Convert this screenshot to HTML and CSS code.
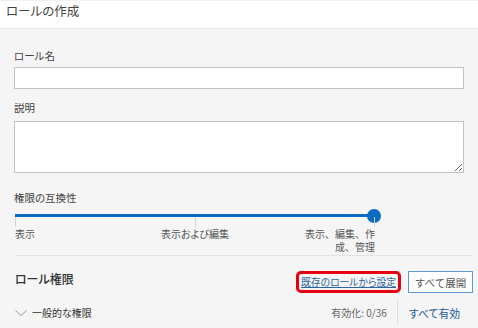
FILE: index.html
```html
<html lang="ja">
<head>
    <meta charset="utf-8"/>
    <title>ロールの作成</title>
    <link rel="stylesheet" href="styles.css">
</head>
<body>
    <header class="page-head">ロールの作成</header>

    <main class="panel">
        <div class="field">
            <label class="field-label">ロール名</label>
            <input class="text-input" type="text">
        </div>

        <div class="field">
            <label class="field-label">説明</label>
            <textarea class="text-area"></textarea>
        </div>

        <div class="field field-slider">
            <label class="field-label">権限の互換性</label>
            <div class="slider">
                <div class="track"><span class="thumb"></span></div>
                <div class="stops">
                    <span class="stop stop-start">表示</span>
                    <span class="stop stop-mid">表示および編集</span>
                    <span class="stop stop-end">表示、編集、作成、管理</span>
                </div>
            </div>
        </div>

        <hr class="divider">

        <section class="perm-head">
            <h2 class="perm-title">ロール権限</h2>
            <div class="perm-actions">
                <span class="mark"><a class="link" href="#">既存のロールから設定</a></span>
                <button class="btn">すべて展開</button>
            </div>
        </section>

        <div class="group-row">
            <div class="group-name">
                <svg class="chevron" width="12" height="6" viewBox="0 0 12 6">
                    <polyline points="0.5,0.5 6,5.5 11.5,0.5" fill="none" stroke="#9a9a9a" stroke-width="1"/>
                </svg>
                一般的な権限
            </div>
            <div class="group-tools">
                <span class="count">有効化: 0/36</span>
                <span class="sep"></span>
                <a class="enable-all" href="#">すべて有効</a>
            </div>
        </div>
    </main>
</body>
</html>
```

FILE: styles.css
```css
body {
    margin: 0;
    background: #f5f5f5;
    font-family: "Noto Sans CJK JP", "Noto Sans", sans-serif;
    font-feature-settings: "palt";
    color: #444;
}

.page-head {
    height: 29px;
    box-sizing: border-box;
    padding: 1px 0 0 6px;
    line-height: 18px;
    font-size: 12.5px;
    color: #444;
    background: #fff;
    border-top: 1px solid #f0f0f0;
    border-bottom: 1px solid #ececec;
}

.panel {
    padding: 20px 5px 0 14px;
}

.field {
    margin-right: 9px;
    margin-bottom: 12px;
}

.field-label {
    display: block;
    font-size: 10.5px;
    line-height: 14px;
    color: #444;
}

.text-input,
.text-area {
    display: block;
    width: 100%;
    box-sizing: border-box;
    border: 1px solid #c2c2c2;
    background: #fff;
    font-family: inherit;
    margin: 4px 0 0;
}
.text-input {
    height: 22px;
}
.text-area {
    height: 52px;
    margin-top: 6px;
}

.field:nth-child(2) {
    margin-bottom: 18px;
}
.field-slider {
    margin-bottom: 0;
}

.slider {
    width: 360px;
    margin: 9px 0 0 1px;
}
.track {
    position: relative;
    height: 3px;
    background: #0a6bc0;
}
.thumb {
    position: absolute;
    right: -6px;
    top: -5.5px;
    width: 14px;
    height: 14px;
    border-radius: 50%;
    background: #0a6bc0;
}

.stops {
    display: grid;
    grid-template-columns: 1fr 1fr 1fr;
    font-size: 10px;
    line-height: 13px;
    color: #555;
}
.stop {
    position: relative;
    padding-top: 10px;
}
.stop::before {
    content: "";
    position: absolute;
    top: 0;
    width: 1px;
    height: 10px;
    background: #d4d4d4;
}
.stop-start::before { left: 0; }
.stop-mid {
    text-align: center;
    white-space: nowrap;
}
.stop-mid::before { left: 50%; }
.stop-end {
    justify-self: end;
    max-width: 71px;
    text-align: right;
    font-feature-settings: normal;
}
.stop-end::before { right: 0; }

.divider {
    border: 0;
    border-top: 1px solid #e3e3e3;
    margin: 2px 0 0 1px;
}

.perm-head {
    display: flex;
    justify-content: space-between;
    align-items: flex-start;
    margin-top: 15px;
    height: 23px;
}
.perm-title {
    margin: 0 0 0 1px;
    font-size: 12px;
    font-weight: 500;
    line-height: 16px;
    color: #333;
}
.perm-actions {
    display: flex;
    align-items: center;
    gap: 7px;
}
.mark {
    display: inline-block;
    border: 3px solid #e60012;
    border-radius: 5px;
    padding: 0 2px;
    height: 16px;
    line-height: 16px;
}
.link {
    font-size: 9.8px;
    color: #2c64a0;
    text-decoration: underline;
}
.btn {
    width: 65px;
    height: 22px;
    border: 1px solid #5b98d6;
    background: #fff;
    color: #555;
    font-family: inherit;
    font-size: 10.5px;
    padding: 0;
}

.group-row {
    display: flex;
    justify-content: space-between;
    align-items: center;
    height: 25px;
    margin-top: 6px;
    padding-right: 13px;
}
.group-name {
    display: flex;
    align-items: center;
    gap: 5px;
    margin-left: 1px;
    font-size: 10px;
    color: #333;
}
.group-tools {
    display: flex;
    align-items: center;
    height: 100%;
}
.count {
    font-size: 10px;
    color: #666;
}
.sep {
    width: 1px;
    height: 100%;
    background: #dedede;
    margin: 0 11px 0 10px;
}
.enable-all {
    font-size: 10.8px;
    color: #1f5c9e;
    text-decoration: none;
}
```
